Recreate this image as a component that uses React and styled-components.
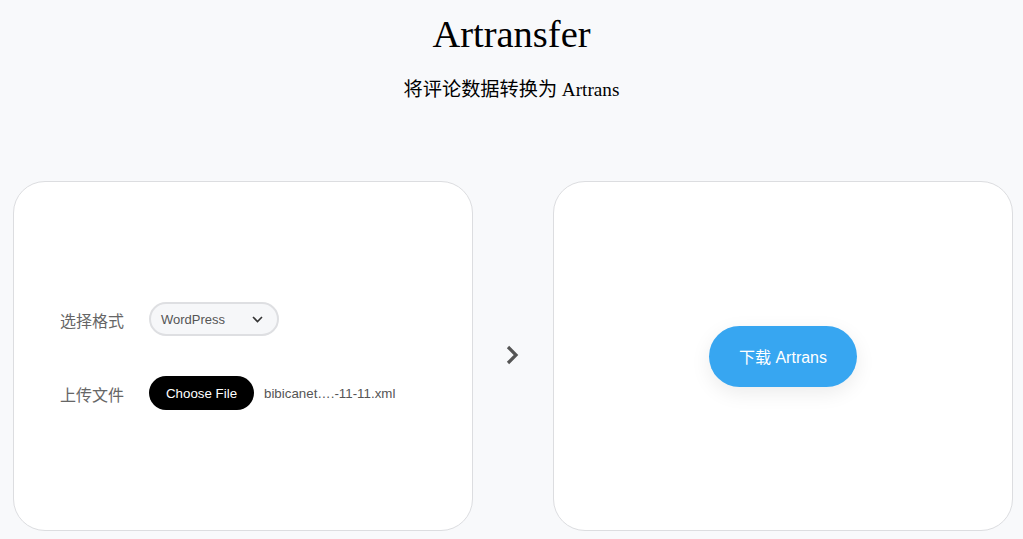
import React from 'react';
import styled, { createGlobalStyle } from 'styled-components';

const GlobalStyle = createGlobalStyle`
  html, body {
    margin: 0;
    padding: 0;
    background: #f8f9fb;
  }
  body {
    font-family: "Liberation Serif", "Noto Sans CJK SC", serif;
    color: #000;
  }
`;

const Page = styled.div`
  width: 1023px;
  height: 539px;
  display: flex;
  flex-direction: column;
  align-items: stretch;
  overflow: hidden;
`;

const Header = styled.header`
  display: flex;
  flex-direction: column;
  align-items: center;
  height: 181px;
  box-sizing: border-box;
  padding-top: 12px;
`;

const Title = styled.h1`
  margin: 0;
  font-size: 38.5px;
  font-weight: 400;
  line-height: 44px;
`;

const Subtitle = styled.p`
  margin: 22px 0 0;
  font-size: 19.2px;
  line-height: 24px;
`;

const Main = styled.main`
  display: flex;
  padding: 0 0 0 13px;
  height: 350px;
`;

const Card = styled.section`
  flex: 0 0 460px;
  box-sizing: border-box;
  background: #fff;
  border: 1px solid #dcdde0;
  border-radius: 32px;
  display: flex;
  flex-direction: column;
  justify-content: center;
  align-items: ${p => (p.centered ? 'center' : 'flex-start')};
  padding-left: ${p => (p.centered ? '0' : '46px')};
  gap: 40px;
`;

const Divider = styled.div`
  flex: 0 0 80px;
  display: flex;
  align-items: center;
  justify-content: center;
  padding-bottom: 2px;
`;

const Row = styled.div`
  display: flex;
  align-items: center;
  font-family: "Liberation Sans", "Noto Sans CJK SC", sans-serif;
`;

const Label = styled.label`
  width: 64px;
  margin-right: 25px;
  font-size: 16px;
  color: #666;
  padding-top: 1px;
`;

const Select = styled.div`
  box-sizing: border-box;
  width: 130px;
  height: 34px;
  border: 2px solid #dedfe2;
  border-radius: 17px;
  background: #f6f7f9;
  display: flex;
  align-items: center;
  justify-content: space-between;
  padding: 0 14px 0 10px;
  font-size: 13px;
  color: #555;
`;

const FileButton = styled.div`
  box-sizing: border-box;
  height: 34px;
  width: 105px;
  border-radius: 17px;
  background: #000;
  color: #fff;
  font-size: 13.33px;
  display: flex;
  align-items: center;
  justify-content: center;
`;

const FileName = styled.span`
  margin-left: 10px;
  font-size: 13.33px;
  color: #555;
`;

const DownloadButton = styled.button`
  height: 61px;
  padding: 0 30px;
  border: none;
  border-radius: 31px;
  background: #37a6f1;
  color: #fff;
  font-size: 16px;
  font-family: "Liberation Sans", "Noto Sans CJK SC", sans-serif;
  box-shadow: 0 6px 20px rgba(0, 0, 0, 0.08);
  cursor: pointer;
`;

export default function App() {
  return (
    <Page>
      <GlobalStyle />
      <Header>
        <Title>Artransfer</Title>
        <Subtitle>将评论数据转换为 Artrans</Subtitle>
      </Header>
      <Main>
        <Card>
          <Row>
            <Label>选择格式</Label>
            <Select>
              <span>WordPress</span>
              <svg width="11" height="7" viewBox="0 0 11 7">
                <polyline points="1,1 5.5,5.5 10,1" fill="none" stroke="#333" strokeWidth="1.6" />
              </svg>
            </Select>
          </Row>
          <Row>
            <Label>上传文件</Label>
            <FileButton>Choose File</FileButton>
            <FileName>bibicanet….-11-11.xml</FileName>
          </Row>
        </Card>
        <Divider>
          <svg width="14" height="20" viewBox="0 0 14 20">
            <polyline points="2,2 10,10 2,18" fill="none" stroke="#555" strokeWidth="3.2" />
          </svg>
        </Divider>
        <Card centered>
          <DownloadButton>下载 Artrans</DownloadButton>
        </Card>
      </Main>
    </Page>
  );
}
